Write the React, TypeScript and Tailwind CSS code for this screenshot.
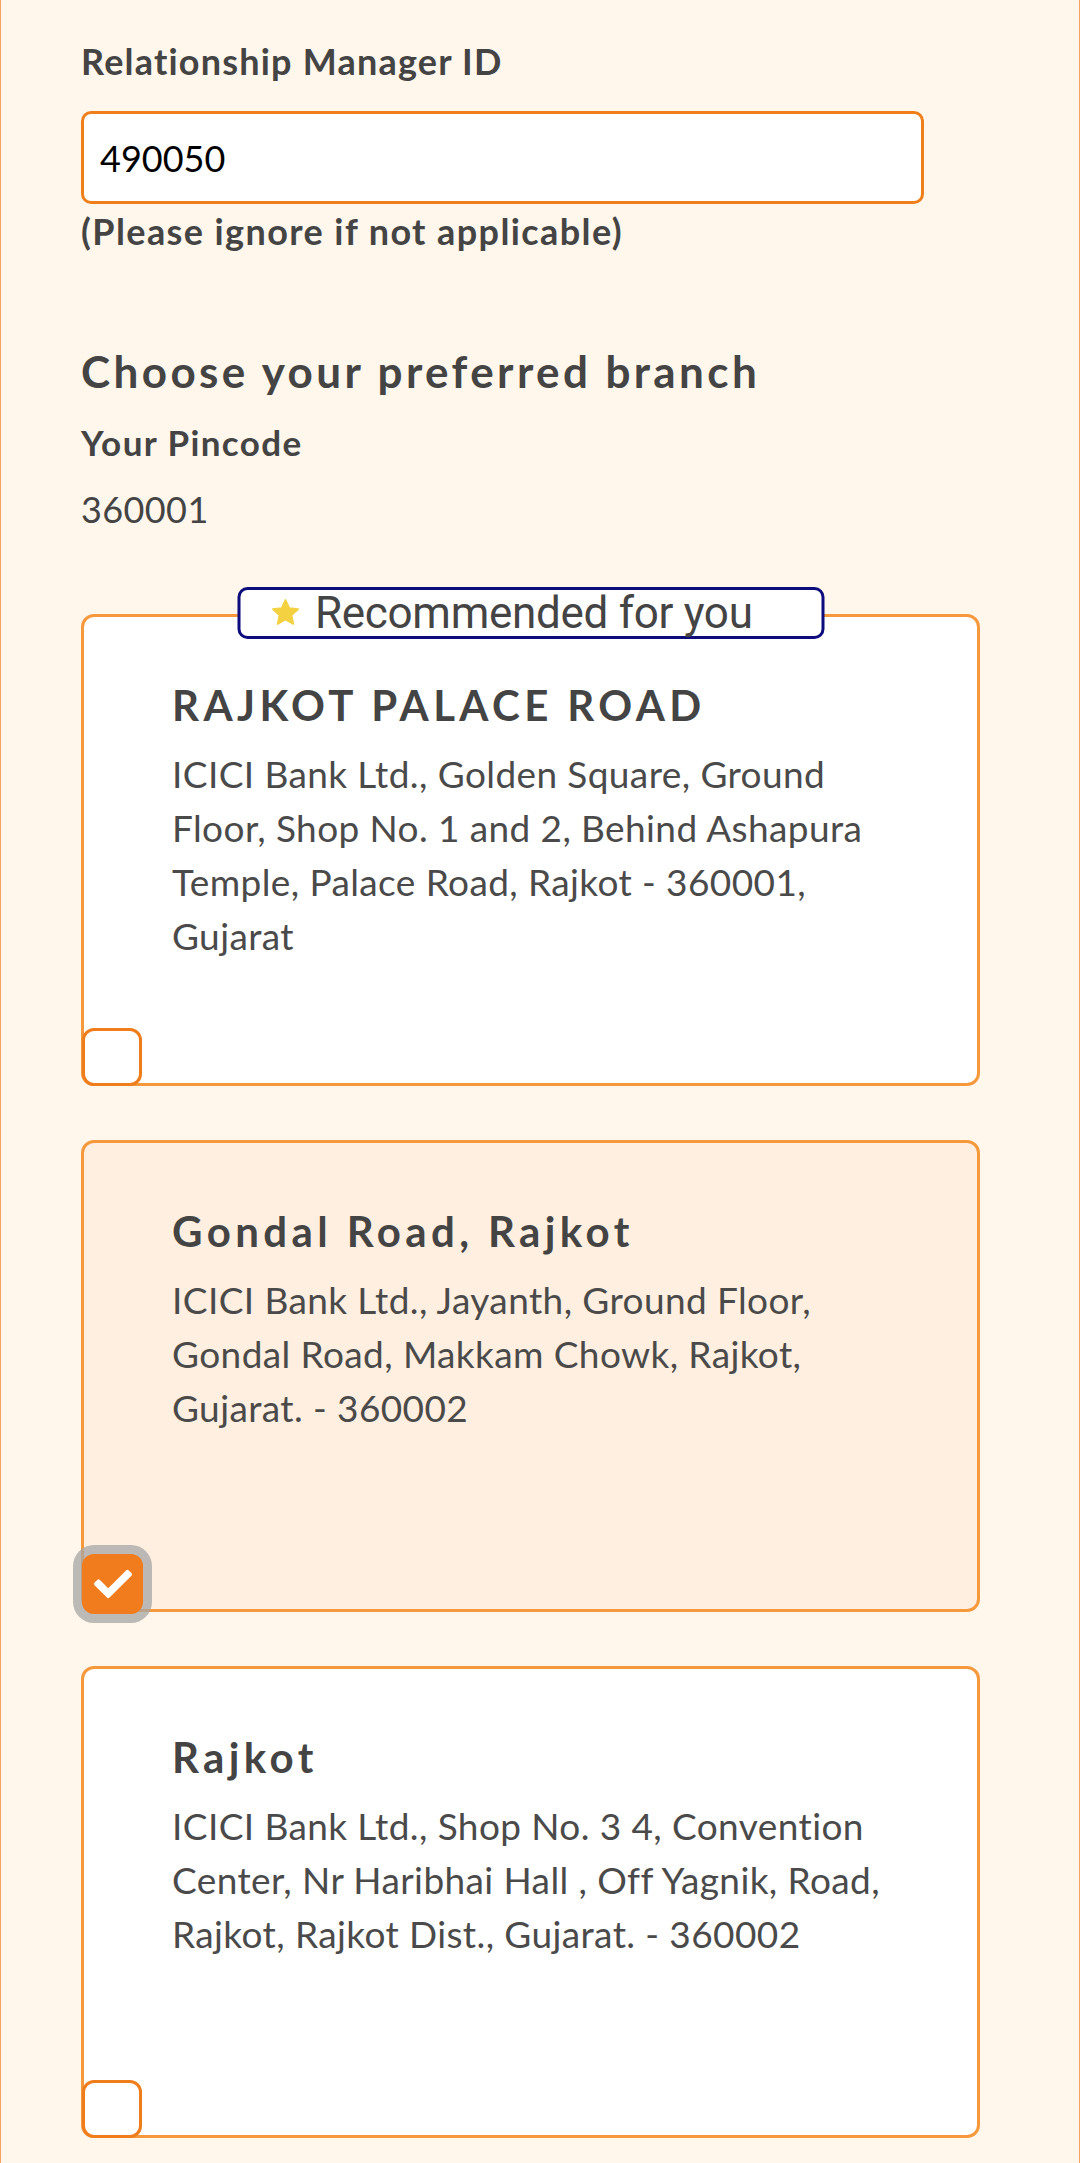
import { FaCheck } from 'react-icons/fa';

type Branch = {
  name: string;
  lines: string[];
  recommended?: boolean;
  selected?: boolean;
};

const branches: Branch[] = [
  {
    name: 'RAJKOT PALACE ROAD',
    lines: [
      'ICICI Bank Ltd., Golden Square, Ground',
      'Floor, Shop No. 1 and 2, Behind Ashapura',
      'Temple, Palace Road, Rajkot - 360001,',
      'Gujarat',
    ],
    recommended: true,
  },
  {
    name: 'Gondal Road, Rajkot',
    lines: [
      'ICICI Bank Ltd., Jayanth, Ground Floor,',
      'Gondal Road, Makkam Chowk, Rajkot,',
      'Gujarat. - 360002',
    ],
    selected: true,
  },
  {
    name: 'Rajkot',
    lines: [
      'ICICI Bank Ltd., Shop No. 3 4, Convention',
      'Center, Nr Haribhai Hall , Off Yagnik, Road,',
      'Rajkot, Rajkot Dist., Gujarat. - 360002',
    ],
  },
];

const Star = () => (
  <svg width="32" height="32" viewBox="0 0 24 24" className="shrink-0">
    <path
      d="M12 2.2l2.9 6.1 6.6.8-4.9 4.6 1.3 6.6L12 17l-5.9 3.3 1.3-6.6-4.9-4.6 6.6-.8z"
      fill="#f3d141"
      stroke="#f3d141"
      strokeWidth="1.2"
      strokeLinejoin="round"
    />
  </svg>
);

const BranchCard = ({ branch }: { branch: Branch }) => {
  return (
    <div
      className={`relative h-[472px] rounded-[13px] border-[3px] border-[#f6993d] pl-[88px] pt-[63px] pr-[30px] ${
        branch.selected ? 'bg-[#ffefe1]' : 'bg-white'
      }`}
    >
      {branch.recommended && (
        <div className="absolute top-[-30px] left-1/2 -translate-x-1/2 w-[587px] h-[52px] flex items-center gap-[14px] pl-[29px] rounded-[10px] border-[3px] border-[#0c0c7c] bg-white font-['Roboto',sans-serif] text-[44px] leading-[46px] tracking-[-0.3px] text-[#444]">
          <Star />
          <span>Recommended for you</span>
        </div>
      )}
      <div className="text-[42px] leading-[50px] font-bold tracking-[4.4px] text-[#444]">{branch.name}</div>
      <div className="mt-[17px] text-[37px] leading-[54px] tracking-[0.4px] text-[#4a4a4a]">
        {branch.lines.map((line) => (
          <div key={line}>{line}</div>
        ))}
      </div>
      {branch.selected ? (
        <div className="absolute left-[-2px] bottom-[-5px] w-[61px] h-[60px] rounded-[12px] bg-[#f07c1d] shadow-[0_0_0_9px_rgba(165,165,165,0.75)] flex items-center justify-center">
          <FaCheck className="text-white" size={38} />
        </div>
      ) : (
        <div className="absolute left-[-2px] bottom-[-3px] w-[60px] h-[58px] rounded-[12px] border-[3px] border-[#ef7d1c] bg-white" />
      )}
    </div>
  );
};

export default function App() {
  return (
    <div className="min-h-screen w-full bg-[#fff6ec] border-x border-[#f3a45c] font-['Lato',sans-serif] text-[#444]">
      <div className="pl-[80px] pt-[40px] pb-[28px]">
        <label className="block text-[36px] leading-[43px] font-bold tracking-[1.2px]">Relationship Manager ID</label>
        <input
          readOnly
          value="490050"
          className="mt-[28px] block w-[843px] h-[93px] rounded-[10px] border-[3px] border-[#ef7f1a] bg-white pl-[16px] text-[36px] text-black outline-none"
        />
        <div className="mt-[6px] text-[36px] leading-[43px] font-bold tracking-[1.4px]">(Please ignore if not applicable)</div>

        <h2 className="mt-[92px] text-[44px] leading-[53px] font-bold tracking-[3.4px]">Choose your preferred branch</h2>
        <div className="mt-[23px] text-[35px] leading-[42px] font-bold tracking-[1.4px]">Your Pincode</div>
        <div className="mt-[25px] text-[36px] leading-[43px] tracking-[0.4px]">360001</div>

        <div className="mt-[83px] w-[899px] flex flex-col gap-[54px]">
          {branches.map((b) => (
            <BranchCard key={b.name} branch={b} />
          ))}
        </div>
      </div>
    </div>
  );
}
